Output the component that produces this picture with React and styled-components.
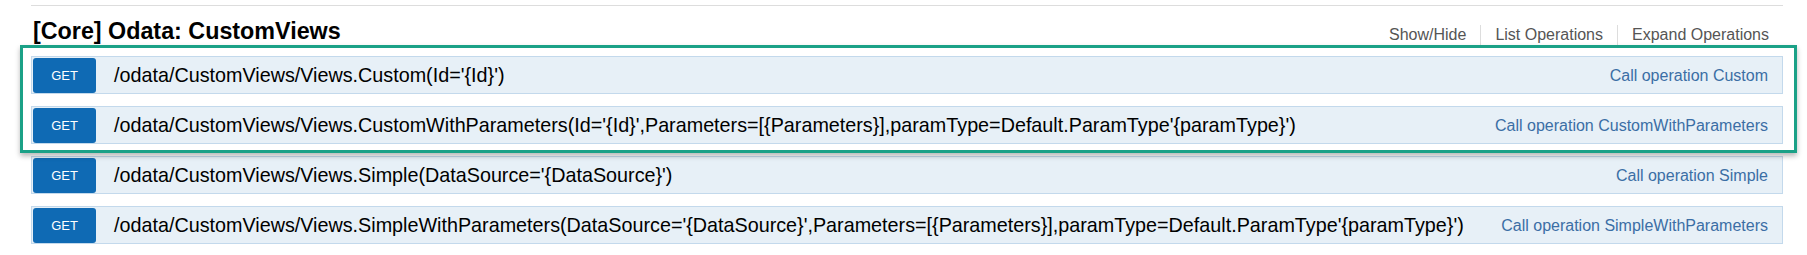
import styled, {createGlobalStyle} from "styled-components";

const GlobalStyle = createGlobalStyle`
  html, body {
    margin: 0;
    padding: 0;
    background: #ffffff;
  }
  body {
    font-family: "Liberation Sans", Arial, sans-serif;
  }
`;

const operations = [
  {
    path: "/odata/CustomViews/Views.Custom(Id='{Id}')",
    name: "Custom",
    highlighted: true,
  },
  {
    path: "/odata/CustomViews/Views.CustomWithParameters(Id='{Id}',Parameters=[{Parameters}],paramType=Default.ParamType'{paramType}')",
    name: "CustomWithParameters",
    highlighted: true,
  },
  {
    path: "/odata/CustomViews/Views.Simple(DataSource='{DataSource}')",
    name: "Simple",
  },
  {
    path: "/odata/CustomViews/Views.SimpleWithParameters(DataSource='{DataSource}',Parameters=[{Parameters}],paramType=Default.ParamType'{paramType}')",
    name: "SimpleWithParameters",
  },
];

function OperationRow({path, name}) {
  return (
    <Row>
      <MethodBadge>GET</MethodBadge>
      <Path>{path}</Path>
      <CallLink>Call operation {name}</CallLink>
    </Row>
  );
}

export default function App() {
  const highlighted = operations.filter(op => op.highlighted);
  const rest = operations.filter(op => !op.highlighted);
  return (
    <>
      <GlobalStyle />
      <Resource>
        <Heading>
          <Title>[Core] Odata: CustomViews</Title>
          <Options>
            <OptionLink>Show/Hide</OptionLink>
            <OptionLink>List Operations</OptionLink>
            <OptionLink $last>Expand Operations</OptionLink>
          </Options>
        </Heading>
        <OperationList>
          <HighlightGroup>
            {highlighted.map(op => (
              <OperationRow key={op.name} path={op.path} name={op.name} />
            ))}
            <Highlight />
          </HighlightGroup>
          {rest.map(op => (
            <OperationRow key={op.name} path={op.path} name={op.name} />
          ))}
        </OperationList>
      </Resource>
    </>
  );
}

const Resource = styled.div`
  width: 1752px;
  margin: 5px 0 0 31px;
  border-top: 1px solid #dddddd;
`;

const Heading = styled.div`
  height: 50px;
  display: flex;
  align-items: flex-start;
  justify-content: space-between;
`;

const Title = styled.h2`
  margin: 11px 0 0 2px;
  font-size: 23.3px;
  line-height: 28px;
  font-weight: bold;
  color: #000000;
`;

const Options = styled.div`
  display: flex;
  margin-top: 19px;
  padding-right: 14px;
`;

const OptionLink = styled.span`
  font-size: 16px;
  line-height: 20px;
  color: #555555;
  padding: 0 14px;
  border-right: ${p => (p.$last ? "none" : "1px solid #dddddd")};
  &:last-child {
    padding-right: 0;
  }
`;

const OperationList = styled.div`
  display: flex;
  flex-direction: column;
  gap: 12px;
`;

const HighlightGroup = styled.div`
  position: relative;
  display: flex;
  flex-direction: column;
  gap: 12px;
`;

const Highlight = styled.div`
  position: absolute;
  top: -11px;
  left: -11px;
  right: -14px;
  bottom: -9px;
  border: 3px solid #1ba187;
  box-shadow: 0 3px 5px rgba(0, 0, 0, 0.28);
  pointer-events: none;
`;

const Row = styled.div`
  box-sizing: border-box;
  height: 38px;
  display: flex;
  align-items: center;
  background: #e7f0f7;
  border: 1px solid #c3d9ec;
  padding: 1px 14px 0 1px;
`;

const MethodBadge = styled.span`
  flex: none;
  width: 63px;
  height: 35px;
  display: flex;
  align-items: center;
  justify-content: center;
  background: #0f6ab4;
  border-radius: 3px;
  color: #ffffff;
  font-size: 13px;
`;

const Path = styled.span`
  flex: 1;
  margin-left: 18px;
  font-size: 19.75px;
  color: #000000;
  white-space: nowrap;
`;

const CallLink = styled.span`
  flex: none;
  font-size: 16px;
  color: #3b6ea5;
`;
